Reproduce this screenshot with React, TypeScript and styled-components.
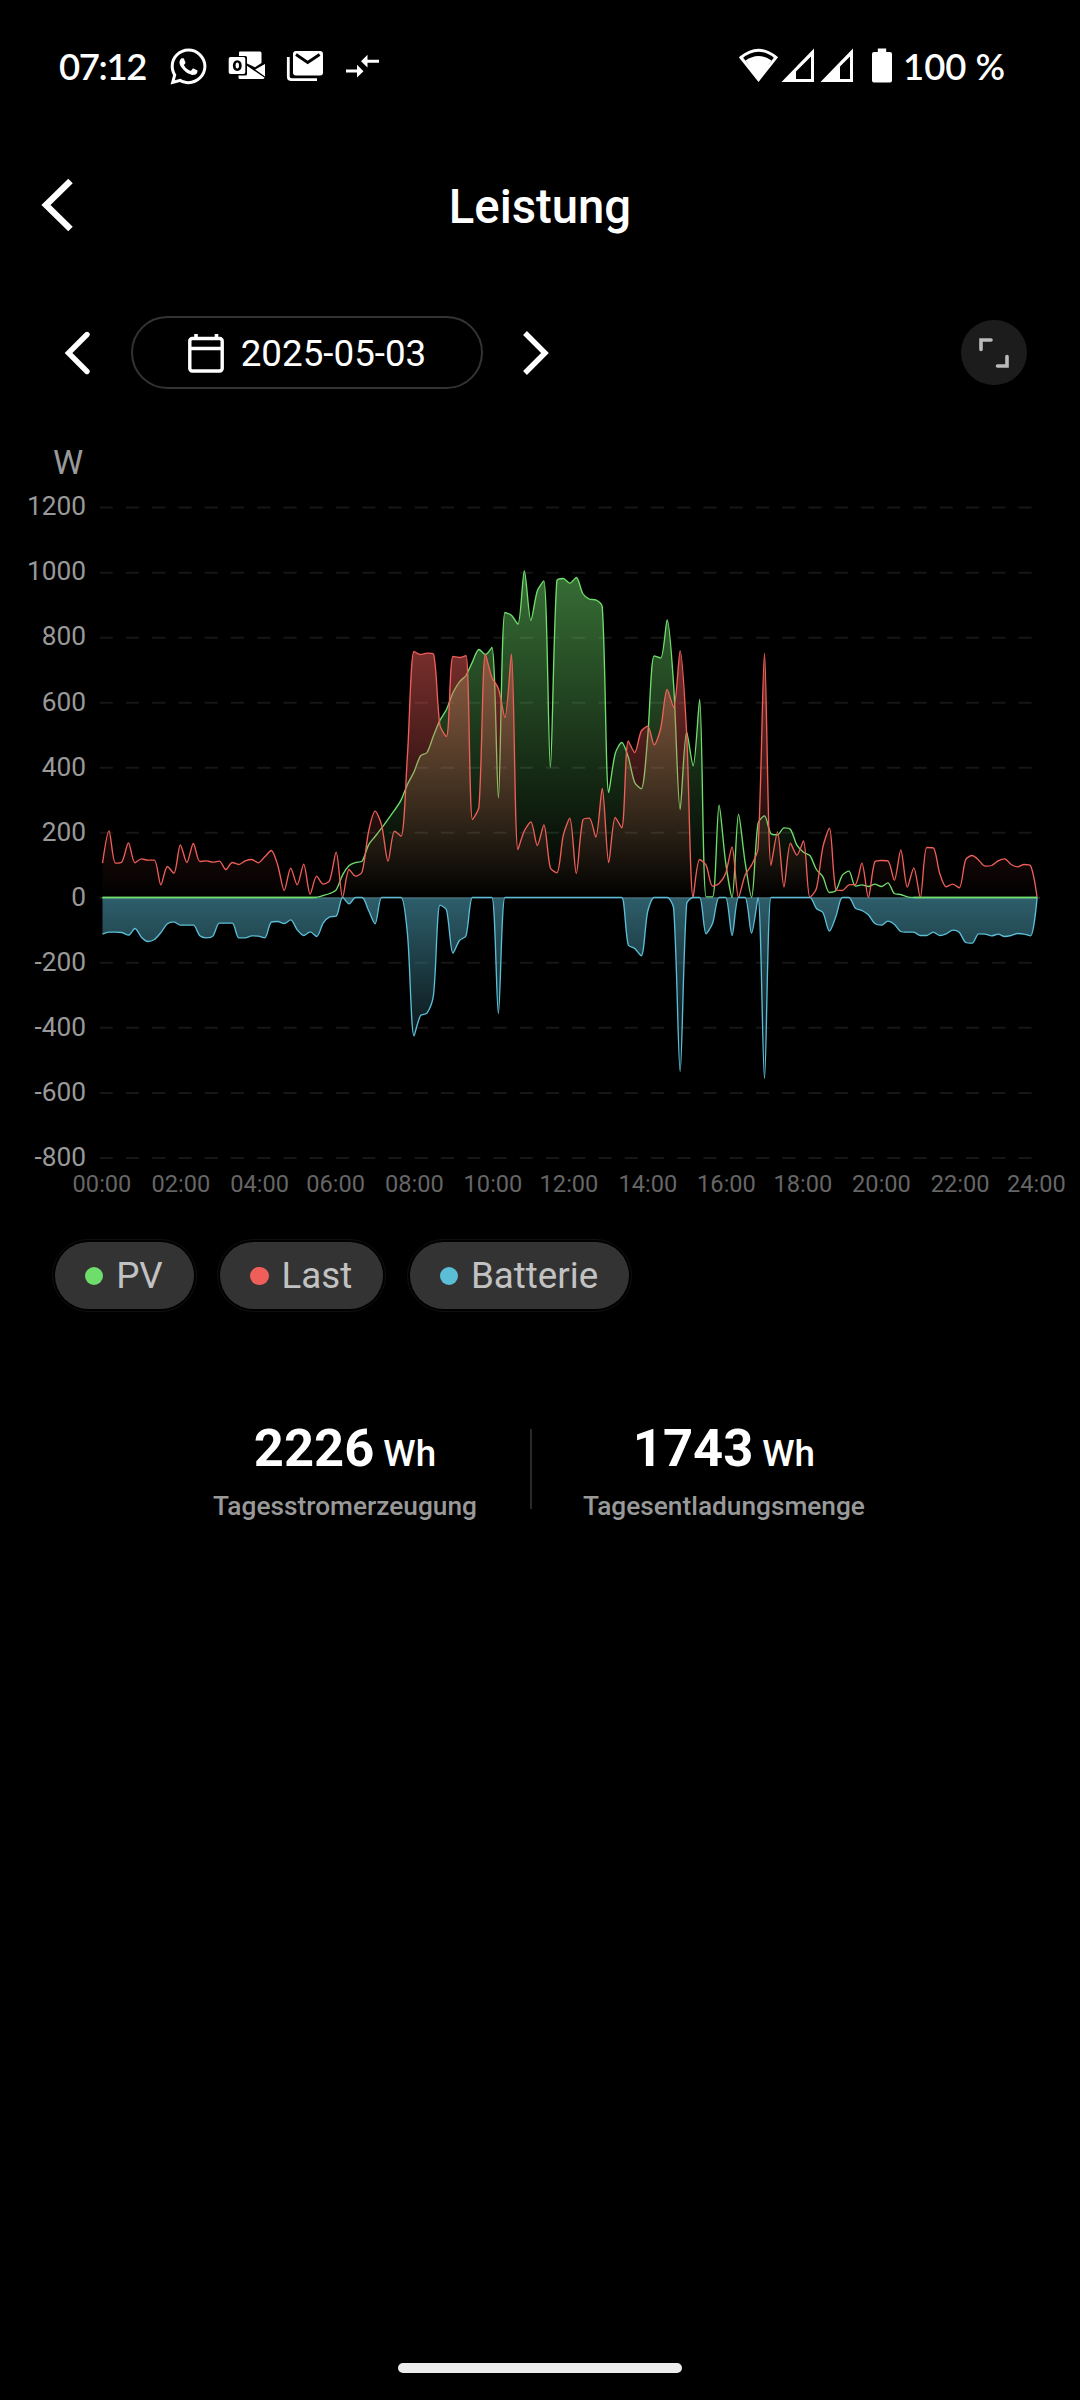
import React from 'react';
import styled, { createGlobalStyle } from 'styled-components';
import { FaWhatsapp } from 'react-icons/fa';

const GlobalStyle = createGlobalStyle`
  html, body { margin: 0; padding: 0; background: #000; }
  * { box-sizing: border-box; }
`;

const Screen = styled.div`
  width: 1080px;
  height: 2400px;
  background: #000;
  color: #fff;
  font-family: Roboto, 'Noto Sans', sans-serif;
  display: flex;
  flex-direction: column;
  overflow: hidden;
`;

const StatusBar = styled.div`
  height: 132px;
  flex: none;
  display: flex;
  justify-content: space-between;
  align-items: center;
  padding: 0 75px 0 59px;
  font-family: Lato, 'Noto Sans', sans-serif;
`;

const StatusGroup = styled.div`
  display: flex;
  align-items: center;
`;

const Clock = styled.span`
  width: 109px;
  font-size: 36.5px;
  font-weight: 600;
  line-height: 44px;
  letter-spacing: -1.4px;
  white-space: nowrap;
`;

const BatteryText = styled.span`
  width: 102px;
  margin-left: 10px;
  font-size: 36.5px;
  font-weight: 600;
  line-height: 44px;
  letter-spacing: 0;
  white-space: nowrap;
`;

const Glyph = styled.svg<{ $ml?: number }>`
  display: block;
  flex: none;
  margin-left: ${(p) => p.$ml ?? 0}px;
`;

const Header = styled.header`
  height: 146px;
  flex: none;
  display: grid;
  grid-template-columns: 120px 1fr 120px;
  align-items: center;
`;

const IconButton = styled.button`
  border: 0;
  padding: 0;
  margin: 0;
  background: none;
  color: inherit;
  display: flex;
  align-items: center;
`;

const BackButton = styled(IconButton)`
  padding-left: 40px;
`;

const Title = styled.h1`
  margin: 0;
  padding-top: 3px;
  text-align: center;
  font-size: 47.25px;
  line-height: 56px;
  font-weight: 500;
`;

const DateRow = styled.div`
  height: 149px;
  flex: none;
  display: flex;
  align-items: center;
  padding: 0 53px 0 63px;
`;

const DatePill = styled.div`
  width: 352px;
  height: 73.5px;
  margin: 0 38px;
  border: 2.6px solid #333;
  border-radius: 37px;
  display: flex;
  align-items: center;
  justify-content: center;
  gap: 17px;
  font-size: 36.75px;
  line-height: 44px;
`;

const DateText = styled.span`
  padding-top: 2px;
`;

const Expand = styled(IconButton)`
  width: 65.6px;
  height: 65.6px;
  margin-left: auto;
  border-radius: 50%;
  background: #1c1c1c;
  justify-content: center;
`;

const Chart = styled.svg`
  display: block;
  flex: none;
  font-family: Roboto, sans-serif;
`;

const Legend = styled.div`
  flex: none;
  display: flex;
  gap: 20.5px;
  padding: 29px 0 0 52px;
`;

const Chip = styled.div`
  height: 73px;
  padding: 3px;
  border: 1px solid #101010;
  border-radius: 37px;
  display: flex;
`;

const ChipBody = styled.div`
  height: 67px;
  margin: -1px;
  padding: 1px 31px 0 30px;
  border-radius: 34px;
  background: #333;
  color: #c2c2c2;
  display: flex;
  align-items: center;
  gap: 12.8px;
  font-size: 36.75px;
  line-height: 44px;
`;

const Dot = styled.span<{ $color: string }>`
  width: 18.4px;
  height: 18.4px;
  border-radius: 50%;
  background: ${(p) => p.$color};
`;

const Stats = styled.div`
  flex: none;
  display: flex;
  justify-content: center;
  padding-top: 109px;
`;

const Stat = styled.div<{ $left: number; $right: number }>`
  display: flex;
  flex-direction: column;
  align-items: center;
  padding: 0 ${(p) => p.$right}px 0 ${(p) => p.$left}px;
`;

const Divider = styled.div`
  width: 2px;
  height: 80px;
  margin-top: 8px;
  background: #2a2a2a;
`;

const Value = styled.div`
  font-size: 52.5px;
  line-height: 54px;
  font-weight: 700;
`;

const Unit = styled.span`
  margin-left: 9px;
  font-size: 36.75px;
  font-weight: 500;
`;

const Caption = styled.div`
  margin-top: 9px;
  font-size: 26.25px;
  line-height: 32px;
  font-weight: 500;
  color: #999;
`;

const NavArea = styled.div`
  margin-top: auto;
  padding-bottom: 27px;
  display: flex;
  justify-content: center;
`;

const NavPill = styled.div`
  width: 284px;
  height: 10px;
  border-radius: 5px;
  background: #ececec;
`;

/* One reading every ten minutes, 00:00 to 24:00, in units of 1/0.975 W. */
const zeros = (n: number): number[] => new Array(n).fill(0);

const PV = [
  ...zeros(33), 1, 6, 12, 23, 68, 96, 105, 109, 158, 183, 208, 235, 262, 292, 340, 377,
  425, 435, 485, 532, 564, 614, 647, 666, 707, 744, 729, 750, 299, 855, 847, 820, 980, 831, 920,
  950, 391, 950, 957, 943, 960, 912, 895, 893, 873, 315, 432, 465, 422, 345, 326, 482, 725, 718,
  833, 637, 264, 497, 395, 594, 2, 2, 277, 107, 0, 250, 107, 0, 222, 245, 191, 188, 209, 204,
  157, 136, 126, 84, 62, 15, 21, 67, 79, 34, 38, 33, 40, 33, 44, 12, 9, 2, ...zeros(20),
];

const LOAD = [
  103, 200, 103, 107, 164, 104, 116, 112, 112, 38, 93, 73, 158, 105, 162, 108, 110, 106, 109, 84,
  105, 99, 110, 114, 104, 122, 141, 97, 21, 88, 38, 100, 10, 64, 40, 51, 136, 0, 84, 64,
  77, 198, 259, 218, 109, 199, 184, 432, 738, 729, 733, 730, 516, 483, 723, 720, 726, 234, 272, 730,
  660, 627, 540, 730, 144, 200, 227, 156, 218, 89, 74, 187, 238, 72, 232, 238, 181, 327, 105, 240,
  209, 470, 435, 499, 514, 458, 507, 624, 570, 740, 492, 0, 114, 97, 34, 42, 72, 152, 0, 67,
  97, 147, 732, 96, 197, 32, 163, 127, 170, 0, 27, 152, 208, 24, 21, 38, 39, 103, 0, 107,
  111, 110, 52, 143, 31, 89, 0, 150, 149, 72, 32, 40, 29, 114, 126, 112, 94, 96, 110, 116,
  99, 92, 99, 95, 0,
];

const BATTERY = [
  110, 104, 104, 105, 113, 93, 119, 132, 126, 105, 79, 73, 83, 83, 83, 115, 121, 116, 77, 77,
  77, 121, 121, 115, 116, 121, 74, 72, 78, 67, 97, 114, 103, 117, 77, 58, 56, 0, 19, 0,
  0, 39, 79, 0, 0, 0, 0, 112, 415, 354, 347, 292, 23, 37, 167, 129, 115, 0, 0, 0,
  0, 348, ...zeros(19), 142, 153, 175, 42, 0, 0, 0, 32, 522, 19, 0, 0, 109, 77, 0, 0,
  114, 0, 0, 107, 0, 543, ...zeros(7), 33, 45, 101, 57, 0, 0, 32, 39, 52, 78, 83, 71, 80,
  102, 104, 104, 114, 114, 104, 114, 109, 98, 104, 135, 137, 109, 110, 115, 110, 117, 114, 108,
  110, 115, 0,
].map((v) => -v);

const X0 = 102.5;
const STEP = 934.6 / 144;
const ZERO = 897.5;

const clamp = (v: number, a: number, b: number) =>
  Math.max(Math.min(v, Math.max(a, b)), Math.min(a, b));

function smoothLine(values: number[]): string {
  const pts = values.map((v, i) => [X0 + i * STEP, ZERO - v / 3]);
  const smooth = 0.28;
  let [c0x, c0y] = pts[0];
  let d = `M${c0x.toFixed(2)} ${c0y.toFixed(2)}`;
  for (let i = 1; i < pts.length; i++) {
    const [px, py] = pts[i - 1];
    const [x, y] = pts[i];
    let c1x = x;
    let c1y = y;
    let nx0 = x;
    let ny0 = y;
    if (i < pts.length - 1) {
      const [nx, ny] = pts[i + 1];
      const lp = Math.hypot(x - px, y - py);
      const ln = Math.hypot(nx - x, ny - y);
      const ratio = ln / (ln + lp);
      nx0 = clamp(x + (nx - px) * smooth * ratio, nx, x);
      ny0 = clamp(y + (ny - py) * smooth * ratio, ny, y);
      c1x = clamp(x - ((nx0 - x) * lp) / ln, px, x);
      c1y = clamp(y - ((ny0 - y) * lp) / ln, py, y);
      nx0 = x + ((x - c1x) * ln) / lp;
      ny0 = y + ((y - c1y) * ln) / lp;
    }
    d += `C${[c0x, c0y, c1x, c1y, x, y].map((n) => n.toFixed(2)).join(' ')}`;
    c0x = nx0;
    c0y = ny0;
  }
  return d;
}

const SERIES = [
  { id: 'pv', label: 'PV', color: '#6fdd6b', values: PV },
  { id: 'load', label: 'Last', color: '#ef5e58', values: LOAD },
  { id: 'battery', label: 'Batterie', color: '#5bbdd6', values: BATTERY },
];

const Y_TICKS = [1200, 1000, 800, 600, 400, 200, 0, -200, -400, -600, -800];
const X_CENTERS = [102, 180.8, 259.7, 335.6, 414.3, 493, 569, 647.8, 726.5, 802.8, 881.5, 960.2, 1036.3];

function PowerChart() {
  return (
    <Chart width={1080} height={783} viewBox="0 427 1080 783">
      <defs>
        {SERIES.map((s) => {
          const extreme = Math.max(...s.values.map((v) => Math.abs(v))) / 3;
          const negative = s.id === 'battery';
          return (
            <linearGradient
              key={s.id}
              id={`fill-${s.id}`}
              gradientUnits="userSpaceOnUse"
              x1={0}
              x2={0}
              y1={negative ? ZERO : ZERO - extreme}
              y2={negative ? ZERO + extreme : ZERO}
            >
              <stop offset="0" stopColor={s.color} stopOpacity={0.5} />
              <stop offset="1" stopColor={negative ? '#000' : s.color} stopOpacity={negative ? 0.5 : 0} />
            </linearGradient>
          );
        })}
      </defs>
      <text x={53} y={474} fontSize={34.1} fill="#999">W</text>
      {Y_TICKS.map((t) => {
        const y = ZERO + 0.3 - t * 0.32515;
        return (
          <g key={t}>
            <line
              x1={99.7}
              x2={1040}
              y1={y}
              y2={y}
              stroke={t === 0 ? '#3a3a3a' : '#161616'}
              strokeWidth={t === 0 ? 1.2 : 2}
              strokeDasharray={t === 0 ? undefined : '13.125 13.125'}
            />
            <text x={86} y={y + 7.8} fontSize={26.25} fill="#999" textAnchor="end">{t}</text>
          </g>
        );
      })}
      {X_CENTERS.map((x, i) => (
        <text key={x} x={x} y={1191.6} fontSize={23.6} fill="#666" textAnchor="middle">
          {`${String(i * 2).padStart(2, '0')}:00`}
        </text>
      ))}
      {SERIES.map((s) => {
        const d = smoothLine(s.values);
        return (
          <g key={s.id}>
            <path d={`${d}L${X0 + 144 * STEP} ${ZERO}L${X0} ${ZERO}Z`} fill={`url(#fill-${s.id})`} />
            <path d={d} fill="none" stroke={s.color} strokeWidth={1.35} strokeLinejoin="bevel" />
          </g>
        );
      })}
      <path d={`M${X0} ${ZERO}H${X0 + 33 * STEP}M${X0 + 125 * STEP} ${ZERO}H${X0 + 144 * STEP}`} stroke="#6fdd6b" strokeWidth={1.35} />
    </Chart>
  );
}

export default function App() {
  return (
    <Screen>
      <GlobalStyle />
      <StatusBar>
        <StatusGroup>
          <Clock>07:12</Clock>
          <FaWhatsapp size={41} style={{ display: 'block' }} />
          <Glyph $ml={19} width={38} height={30} viewBox="0 0 38 30" fill="#fff">
            <path d="M11 1.5Q11 .5 12 .5H32Q33.5 .5 33.5 2V12L27 16.2 19 12.4V6.5Q19 5 17.5 5H11Z" />
            <path d="M37 13V25.5L27.2 18.6Z" />
            <path d="M19 14.8L36.6 26.8Q36 28 34.6 28H12Q10.500 28 10.500 26.500V24.500H17.500Q19 24.500 19 23Z" />
            <path
              fillRule="evenodd"
              d="M2.500 6H15.500Q17.300 6 17.300 7.800V21.200Q17.300 23 15.500 23H2.500Q.7 23 .7 21.200V7.800Q.7 6 2.500 6ZM9.300 9.200C6.600 9.200 4.900 11.300 4.900 14.600S6.600 20 9.300 20 13.700 17.900 13.700 14.600 12 9.200 9.300 9.200ZM9.300 11.600C10.500 11.600 11 12.800 11 14.600S10.500 17.600 9.300 17.600 7.600 16.400 7.600 14.600 8.100 11.600 9.300 11.600Z"
            />
          </Glyph>
          <Glyph $ml={20} width={38} height={32} viewBox="0 0 38 32">
            <rect x={7} y={1} width={30} height={24.500} rx={3} fill="#fff" />
            <path d="M10 4.500L21.700 12.500 33.600 4.500" fill="none" stroke="#000" strokeWidth={2.800} />
            <path d="M2.300 7V26.500Q2.300 29.700 5.500 29.700H31" fill="none" stroke="#fff" strokeWidth={2.800} />
          </Glyph>
          <Glyph $ml={22} width={34} height={26} viewBox="0 0 34 26" fill="#fff">
            <path d="M0 16.600H11V11.700L17.500 18.200 11 24.500V19.600H0Z" />
            <path d="M33 6.800H21.500V1.800L15 8.200 21.500 14.600V9.700H33Z" />
          </Glyph>
        </StatusGroup>
        <StatusGroup>
          <Glyph width={40} height={36} viewBox="0 0 40 36">
            <path d="M2 9.500Q19.500 -5 37 9.500L19.500 31.500Z" fill="none" stroke="#fff" strokeWidth={3} />
            <path d="M6.500 12.500Q19.500 3.500 32.500 12.500L19.500 32Z" fill="#fff" />
          </Glyph>
          <Glyph $ml={2} width={34} height={36} viewBox="0 0 34 36">
            <path fillRule="evenodd" fill="#fff" d="M33 .5V34H.5ZM30 8.500L15 23.500V31H30Z" />
          </Glyph>
          <Glyph $ml={5} width={34} height={36} viewBox="0 0 34 36">
            <path fillRule="evenodd" fill="#fff" d="M33 .5V34H.5ZM30 8.500L20 18.500V31H30Z" />
          </Glyph>
          <Glyph $ml={17} width={22} height={36} viewBox="0 0 22 36">
            <path fill="#fff" d="M6.800 .5H15.200V4H19Q21 4 21 6V32.500Q21 34.500 19 34.500H3Q1 34.500 1 32.500V6Q1 4 3 4H6.800Z" />
          </Glyph>
          <BatteryText>100 %</BatteryText>
        </StatusGroup>
      </StatusBar>

      <Header>
        <BackButton aria-label="Zurück">
          <Glyph width={36} height={56} viewBox="0 0 36 56">
            <path d="M30.500 4L6 28 30.500 52" fill="none" stroke="#fff" strokeWidth={6.400} />
          </Glyph>
        </BackButton>
        <Title>Leistung</Title>
      </Header>

      <DateRow>
        <IconButton aria-label="Vorheriger Tag">
          <Glyph width={30} height={46} viewBox="0 0 30 46">
            <path d="M24 4.500L5.500 23 24 41.500" fill="none" stroke="#fff" strokeWidth={5.400} strokeLinecap="round" />
          </Glyph>
        </IconButton>
        <DatePill>
          <Glyph width={36} height={40} viewBox="0 0 36 40">
            <rect x={1.800} y={5.500} width={32.400} height={32.500} rx={2.500} fill="none" stroke="#fff" strokeWidth={3.400} />
            <path d="M2 15.500H34M8 1V7M28.500 1V7" fill="none" stroke="#fff" strokeWidth={3.600} />
          </Glyph>
          <DateText>2025-05-03</DateText>
        </DatePill>
        <IconButton aria-label="Nächster Tag">
          <Glyph width={30} height={46} viewBox="0 0 30 46">
            <path d="M4 3L24 23 4 43" fill="none" stroke="#fff" strokeWidth={5.400} />
          </Glyph>
        </IconButton>
        <Expand aria-label="Vollbild">
          <Glyph width={32} height={32} viewBox="0 0 32 32">
            <path d="M3 12.500V3H13M19.500 29H29V19.500" fill="none" stroke="#bbb" strokeWidth={3.600} strokeLinecap="round" />
          </Glyph>
        </Expand>
      </DateRow>

      <PowerChart />

      <Legend>
        {SERIES.map((s) => (
          <Chip key={s.id}>
            <ChipBody>
              <Dot $color={s.color} />
              <span>{s.label}</span>
            </ChipBody>
          </Chip>
        ))}
      </Legend>

      <Stats>
        <Stat $left={53} $right={53}>
          <Value>2226<Unit>Wh</Unit></Value>
          <Caption>Tagesstromerzeugung</Caption>
        </Stat>
        <Divider />
        <Stat $left={51} $right={55}>
          <Value>1743<Unit>Wh</Unit></Value>
          <Caption>Tagesentladungsmenge</Caption>
        </Stat>
      </Stats>

      <NavArea>
        <NavPill />
      </NavArea>
    </Screen>
  );
}
